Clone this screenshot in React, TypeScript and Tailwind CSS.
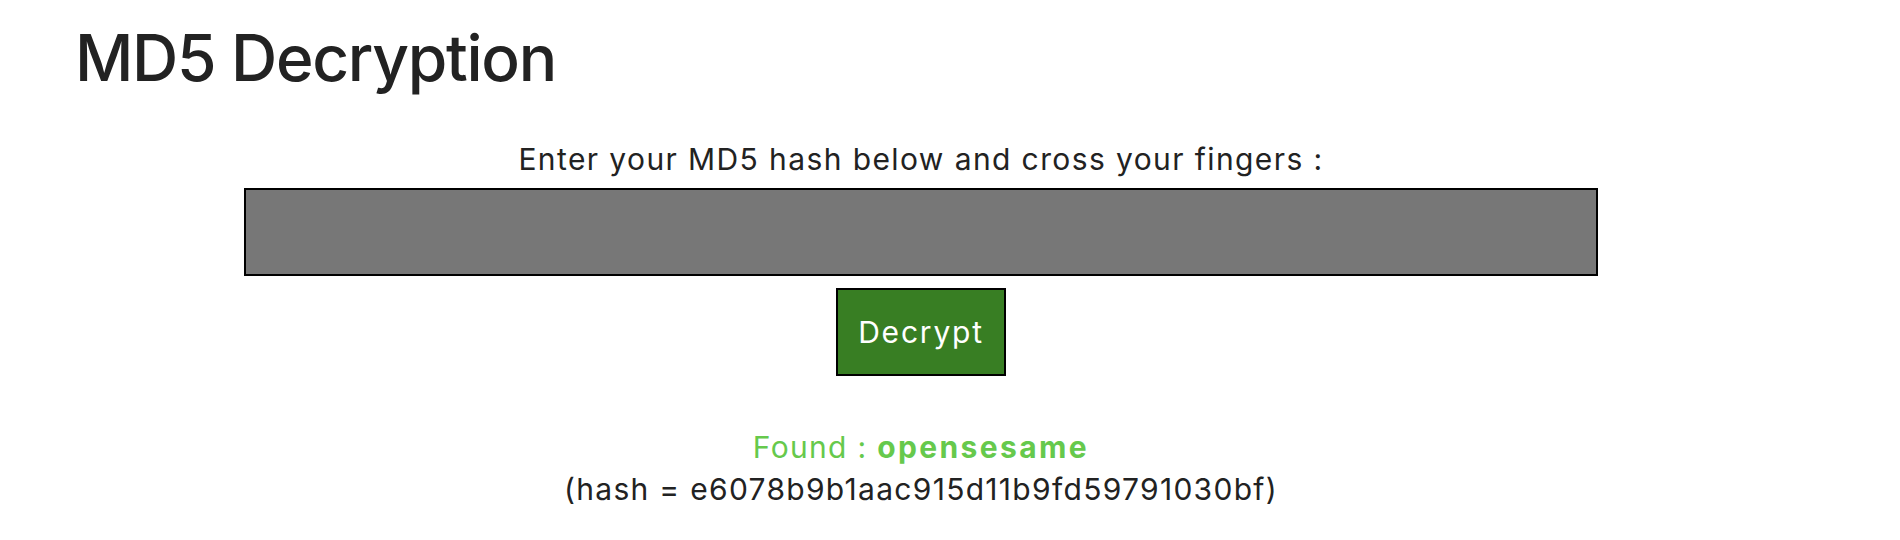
import { useState } from 'react'

export default function App() {
  const [hash, setHash] = useState('')

  return (
    <div className="min-h-[540px] bg-white pl-[75px] pr-[133px] font-['Inter',sans-serif] text-[#222222]">
      <h1 className="pt-[19px] text-[64px] leading-[77px] font-medium tracking-[-1.3px]">MD5 Decryption</h1>

      <div className="flex flex-col items-center text-center">
        <p className="mt-[45px] text-[30px] leading-[36px] tracking-[1.4px]">
          Enter your MD5 hash below and cross your fingers :
        </p>
        <input
          type="text"
          value={hash}
          onChange={(e) => setHash(e.target.value)}
          className="mt-[11px] block h-[88px] w-4/5 border-2 border-black bg-[#777777] px-4 text-[30px] text-white outline-none"
        />
        <button className="mt-[12px] h-[88px] w-[170px] border-2 border-black bg-[#387e23] text-[30px] tracking-[1.8px] text-white">
          Decrypt
        </button>

        <div className="mt-[50px] text-[30px] leading-[42px] tracking-[1.3px]">
          <div className="text-[#66c94c]">
            Found : <b className="font-bold tracking-[2.4px]">opensesame</b>
          </div>
          <div>(hash = e6078b9b1aac915d11b9fd59791030bf)</div>
        </div>
      </div>
    </div>
  )
}
